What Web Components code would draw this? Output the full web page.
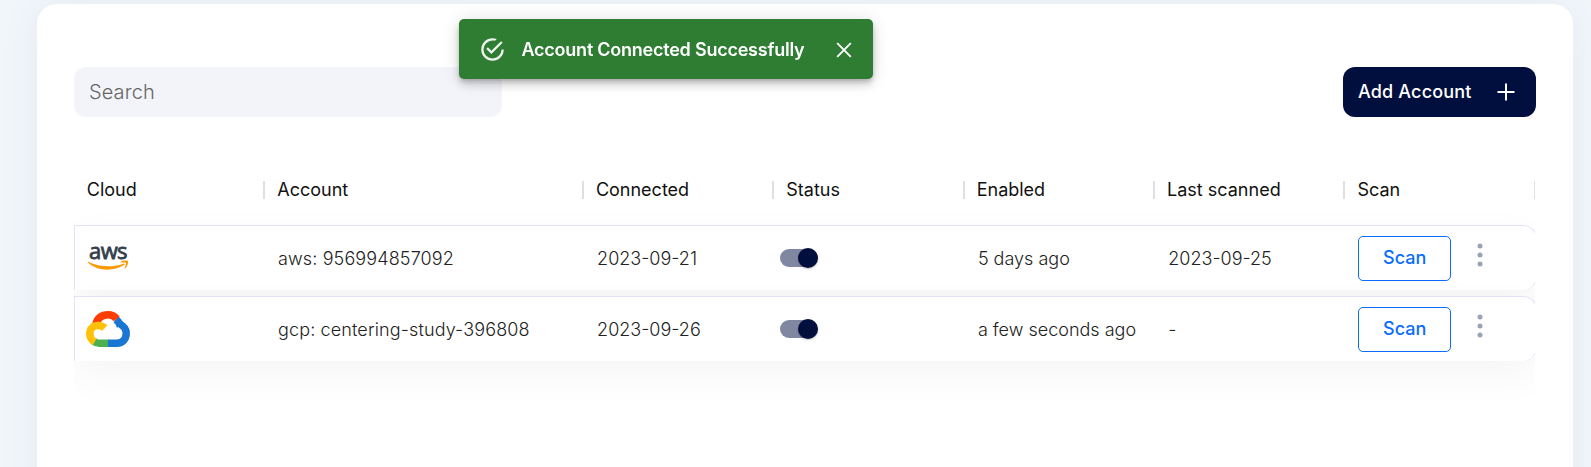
<!DOCTYPE html>
<html lang="en"><head><meta charset="utf-8"><title>Cloud accounts</title>
<style>
html,body{margin:0;height:100%;overflow:hidden}
body{background:#f1f6fb;font-family:Inter,"Liberation Sans",sans-serif}
</style></head><body>
<accounts-page></accounts-page>
<script>
const define=(name,html)=>customElements.define(name,class extends HTMLElement{
  connectedCallback(){
    if(this.shadowRoot)return;
    const t=document.createElement('template');t.innerHTML=html;
    this.attachShadow({mode:'open'}).append(t.content.cloneNode(true));
  }
});
define('toast-alert',`<style>
:host{position:absolute;left:459px;top:19px;width:413.5px;height:60px;box-sizing:border-box;display:flex;align-items:center;padding:0 21px 0 20px;border-radius:5px;background:#2e7d32;color:#fff;box-shadow:0 3px 5px -1px rgba(0,0,0,.2),0 6px 10px rgba(0,0,0,.14),0 1px 18px rgba(0,0,0,.12);font-size:18px;font-weight:600;letter-spacing:-.235px;will-change:transform}
svg{display:block;flex:none}.t{flex:1;margin-left:15.5px;white-space:nowrap}
</style><svg width="27" height="27" viewBox="0 0 24 24" fill="#fff" opacity=".92"><path d="M20,12A8,8 0 0,1 12,20A8,8 0 0,1 4,12A8,8 0 0,1 12,4C12.76,4 13.5,4.11 14.2,4.31L15.77,2.74C14.61,2.26 13.34,2 12,2A10,10 0 0,0 2,12A10,10 0 0,0 12,22A10,10 0 0,0 22,12M7.91,10.08L6.5,11.5L11,16L21,6L19.59,4.58L11,13.17L7.91,10.08Z"/></svg>
<span class="t"><slot></slot></span>
<svg width="16" height="16" viewBox="0 0 16 16" stroke="#fff" stroke-width="1.9" style="margin-top:2px"><path d="M1.2 1.2L14.8 14.8M14.8 1.2L1.2 14.8"/></svg>`);
define('search-field',`<style>
:host{display:flex;align-items:center;width:428px;height:50px;box-sizing:border-box;padding-left:15px;border-radius:12px;background:#f3f4f9;color:#666;font-size:20px;font-weight:300;letter-spacing:.1px}
</style><slot></slot>`);
define('add-button',`<style>
:host{display:flex;align-items:center;justify-content:space-between;width:193px;height:50px;box-sizing:border-box;padding:0 21px 1px 15px;border-radius:12px;background:#000f3d;color:#fff;font-size:18px;font-weight:500;letter-spacing:.16px}
svg{display:block;margin-top:1px}
</style><span><slot></slot></span><svg width="18" height="18" viewBox="0 0 18 18" stroke="#fff" stroke-width="2"><path d="M9 .5V17.5M.5 9H17.5"/></svg>`);
define('head-cell',`<style>
:host{display:flex;align-items:center;box-sizing:border-box;padding-left:12px;height:18px;border-right:2px solid #e0e0e0;color:#111;font-size:18px;font-weight:400;white-space:nowrap}
span{margin-top:-1px}
</style><span><slot></slot></span>`);
define('toggle-switch',`<style>
:host{display:flex;align-items:center;justify-content:flex-end;width:38px;height:20px;position:relative}
i{position:absolute;left:0;top:1px;width:36px;height:18px;border-radius:9px;background:#8087a0}
b{position:relative;width:20px;height:20px;border-radius:50%;background:#000f3d;box-shadow:0 1px 2px rgba(0,0,0,.25)}
</style><i></i><b></b>`);
define('scan-button',`<style>
:host{display:flex;align-items:center;justify-content:center;width:93px;height:45px;box-sizing:border-box;border:1px solid #0a6cff;border-radius:5px;color:#0a6cff;font-size:18px;font-weight:500;padding:0 0 2px 1px}
</style><slot></slot>`);
define('more-icon',`<style>
:host{display:block;margin-left:26.5px;margin-top:-7px}svg{display:block}
</style><svg width="6" height="24" viewBox="0 0 6 24" fill="#9aa3b5"><circle cx="3" cy="3" r="2.5"/><circle cx="3" cy="12" r="2.5"/><circle cx="3" cy="21" r="2.5"/></svg>`);
define('aws-logo',`<style>
:host{display:flex;flex-direction:column;align-items:center;width:42px;margin-top:-4px}
span{font:400 22px/17px "Open Sans",sans-serif;color:#333e4c;-webkit-text-stroke:.8px #333e4c;letter-spacing:-.6px}
svg{display:block;margin-top:1px}
</style><span>aws</span><svg width="42" height="11" viewBox="0 0 42 11" fill="#ff9900"><path d="M1 2.600C.6 2 1.200 1.600 1.900 2C12.500 7.200 25 7.600 36.300 3.700C37.600 3.200 38.300 4.200 37 5.100C26 12 10 11.300 1 2.600Z"/><path d="M33.600 1.900C36 .3 40.300.300 40.900 1.200C41.500 2.300 40.500 6.600 38.300 8.300C37.600 8.700 37.400 8.400 37.700 7.800C38.500 5.900 39.300 3.500 38.900 2.900C38.400 2.300 35.800 2.400 34 2.600C33.300 2.700 33.100 2.300 33.600 1.900Z"/></svg>`);
define('gcp-logo',`<style>:host{display:block;margin-top:-1px}svg{display:block}
</style><svg width="44" height="36" viewBox="0 0 44 36" fill="none" stroke-width="7.5">
<path d="M22.500 32.200H13C11 32.200 9.300 31.500 7.500 30.200" stroke="#4caf50"/>
<path d="M30 8.400C32.600 10.600 34 13.200 34.400 16" stroke="#1976d2"/>
<path d="M34.500 13.500C38.500 15.500 40.200 18.500 40.200 22.300C40.200 28 36.500 32.200 31 32.200H22" stroke="#1976d2"/>
<path d="M9.800 13C11.600 7 16 3.800 22 3.800C25.300 3.800 28.400 5 30.700 7.800" stroke="#ff3d00"/>
<path d="M8.600 31C5.400 29.200 3.800 26.300 3.800 22.800C3.800 17.600 7.400 14.400 12 14.400C14.800 14.400 17 15.200 18.800 17" stroke="#ffc107"/>
</svg>`);
define('account-row',`<style>
:host{display:grid;grid-template-columns:var(--cols);align-items:center;height:65px;width:1463px;box-sizing:border-box;border:1px solid #e3e2f8;border-bottom:0;border-radius:0 14px 14px 0;background:#fff;box-shadow:0 14px 40px rgba(0,0,0,.042);color:#222;font-size:18px;font-weight:300;white-space:nowrap}
::slotted(*){margin-left:13px}
::slotted(span){margin-top:1px}
::slotted(.account){letter-spacing:.13px;margin-left:12.500px}
::slotted(toggle-switch){margin-left:6px;margin-top:-1px}
::slotted(.actions){margin-left:12px}
::slotted(aws-logo){margin-left:12px}::slotted(gcp-logo){margin-left:11px}
</style><slot></slot>`);
define('accounts-page',`<style>
:host{display:block;height:467px;position:relative;overflow:hidden}
.card{margin:4px 18px 0 37px;height:520px;box-sizing:border-box;border-radius:20px;background:#fff;padding:63px 37px 0;box-shadow:0 0 40px rgba(90,70,110,.065)}
.bar{display:flex;justify-content:space-between}
.table{--cols:190.5px 318.6px repeat(5,190.4px);width:1461px;margin-top:63px;padding-bottom:60px;clip-path:inset(0)}
.head{display:grid;grid-template-columns:var(--cols);align-items:center;height:20px;margin-bottom:25px;margin-left:.8px}
.rows{display:flex;flex-direction:column;gap:6px}
.actions{display:flex;align-items:center}
</style>
<div class="card"><div class="bar"><search-field>Search</search-field><add-button>Add Account</add-button></div>
<div class="table"><div class="head"><head-cell>Cloud</head-cell><head-cell>Account</head-cell><head-cell>Connected</head-cell><head-cell>Status</head-cell><head-cell>Enabled</head-cell><head-cell>Last scanned</head-cell><head-cell>Scan</head-cell></div>
<div class="rows">
<account-row><aws-logo></aws-logo><span class="account">aws: 956994857092</span><span>2023-09-21</span><toggle-switch></toggle-switch><span>5 days ago</span><span>2023-09-25</span><div class="actions"><scan-button>Scan</scan-button><more-icon></more-icon></div></account-row>
<account-row><gcp-logo></gcp-logo><span class="account">gcp: centering-study-396808</span><span>2023-09-26</span><toggle-switch></toggle-switch><span>a few seconds ago</span><span>-</span><div class="actions"><scan-button>Scan</scan-button><more-icon></more-icon></div></account-row>
</div></div></div>
<toast-alert>Account Connected Successfully</toast-alert>`);
</script></body></html>
